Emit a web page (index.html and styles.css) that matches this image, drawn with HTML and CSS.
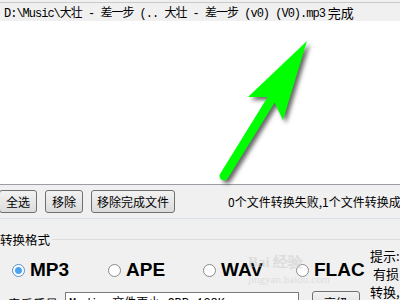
FILE: index.html
```html
<!DOCTYPE html>
<html lang="zh">
<head>
    <meta charset="UTF-8">
    <title>转换</title>
    <link rel="stylesheet" href="styles.css">
</head>
<body>
    <div class="list">
        <div class="row">
            <span class="path">D:\Music\大壮 - 差一步 (.. 大壮 - 差一步 (v0) (V0).mp3</span>
            <span class="state">完成</span>
        </div>
        <div class="blank">
            <svg class="arrow" width="120" height="160" viewBox="200 30 120 160">
                <line x1="224" y1="175" x2="271" y2="99" stroke="#00ff00" stroke-width="9" stroke-linecap="round"/>
                <polygon points="307,40 248,96 272,96 283,119" fill="#00ff00"/>
            </svg>
        </div>
    </div>

    <div class="toolbar">
        <button class="btn">全选</button>
        <button class="btn">移除</button>
        <button class="btn">移除完成文件</button>
        <span class="status">0个文件转换失败,1个文件转换成功</span>
    </div>

    <div class="format">
        <div class="legend"><span>转换格式</span></div>
        <div class="body">
            <div class="radios">
                <label class="radio"><span class="dot on"></span>MP3</label>
                <label class="radio"><span class="dot"></span>APE</label>
                <label class="radio"><span class="dot"></span>WAV</label>
                <label class="radio"><span class="dot"></span>FLAC</label>
                <span class="mark">Bai 经验<br><small>jingyan.baidu.com</small></span>
            </div>
            <div class="tip">提示:<br>&nbsp;有损<br>转换,</div>
        </div>
        <div class="quality">
            <span class="qlabel">音乐质量</span>
            <div class="input">Medium文件更小 CBR:128K</div>
            <button class="btn adv">高级</button>
        </div>
    </div>
</body>
</html>
```

FILE: styles.css
```css
body {
    margin: 0;
    width: 400px;
    background: #f0f0f0;
    font-family: "Noto Sans CJK SC", sans-serif;
    font-size: 12px;
    overflow: hidden;
}

.list {
    background: #ffffff;
    border-top: 1px solid #c9c9c9;
    border-bottom: 1px solid #9c9ca4;
    margin-top: 2px;
    height: 181px;
}

.row {
    display: flex;
    height: 18px;
    align-items: center;
    background: #f0f0f0;
    padding-left: 4px;
    white-space: nowrap;
}

.path {
    flex: none;
    font-family: "Liberation Mono", "Noto Sans CJK SC", monospace;
    font-size: 12px;
    letter-spacing: -1px;
    margin-right: 3px;
}

.state {
    flex: none;
    font-size: 13px;
}

.blank {
    position: relative;
    height: 163px;
}

.arrow {
    position: absolute;
    left: 200px;
    top: 10px;
    filter: drop-shadow(3px 3px 2px rgba(0, 0, 0, 0.6));
}

.toolbar {
    display: flex;
    align-items: center;
    height: 33px;
    border-bottom: 1px solid #d7e0e8;
    white-space: nowrap;
}

.btn {
    flex: none;
    white-space: nowrap;
    font-family: "Noto Sans CJK SC", sans-serif;
    font-size: 12px;
    height: 23px;
    padding: 0 5px;
    margin-right: 8px;
    border: 1px solid #707070;
    border-radius: 3px;
    background: linear-gradient(#f2f2f2, #dcdcdc);
    line-height: 20px;
}

.toolbar .btn:first-child {
    margin-left: -1px;
    width: 38px;
}

.toolbar .btn:nth-child(2) {
    width: 38px;
}

.status {
    flex: none;
    margin-left: 45px;
    font-size: 12px;
}

.format {
    padding-top: 12px;
}

.legend {
    display: flex;
    align-items: center;
    height: 16px;
    font-size: 12.5px;
    white-space: nowrap;
}

.legend span {
    flex: none;
}

.legend::after {
    content: "";
    flex: 1;
    border-top: 1px solid #dcdcdc;
    margin-left: 2px;
}

.body {
    display: flex;
    width: 400px;
}

.radios {
    flex: none;
    position: relative;
    display: grid;
    grid-template-columns: 96px 95px 93px auto;
    align-items: center;
    width: 358px;
    height: 28px;
    margin-top: 9px;
    padding-left: 12px;
}

.radio {
    display: flex;
    align-items: center;
    font-family: "Liberation Sans", Arial, sans-serif;
    font-weight: bold;
    font-size: 19px;
}

.dot {
    width: 11px;
    height: 11px;
    border: 1px solid #8a8a8a;
    border-radius: 50%;
    background: #ffffff;
    margin-right: 5px;
    box-sizing: content-box;
}

.dot.on {
    background: radial-gradient(circle, #4aa3f0 3px, #ffffff 4px);
    border-color: #5b8fc9;
}

.mark {
    position: absolute;
    left: 248px;
    top: -2px;
    color: rgba(200, 200, 200, 0.5);
    font-family: "Liberation Serif", serif;
    font-weight: bold;
    font-size: 15px;
    line-height: 16px;
    white-space: nowrap;
}

.mark small {
    font-size: 11px;
    font-weight: normal;
}

.tip {
    flex: none;
    font-size: 13px;
    line-height: 18px;
    width: 40px;
    white-space: nowrap;
    margin-top: 0;
}

.quality {
    display: flex;
    align-items: flex-start;
    margin-top: -10px;
    padding-left: 8px;
}

.qlabel {
    flex: none;
    font-size: 12.5px;
    width: 57px;
    margin-top: 3px;
}

.input {
    flex: none;
    width: 234px;
    height: 20px;
    border: 1px solid #7a7a7a;
    background: #ffffff;
    font-family: "Liberation Mono", "Noto Sans CJK SC", monospace;
    font-size: 12px;
    padding-left: 3px;
    box-sizing: border-box;
    margin-top: 1px;
    white-space: nowrap;
}

.btn.adv {
    margin-left: 13px;
    width: 48px;
}
```
